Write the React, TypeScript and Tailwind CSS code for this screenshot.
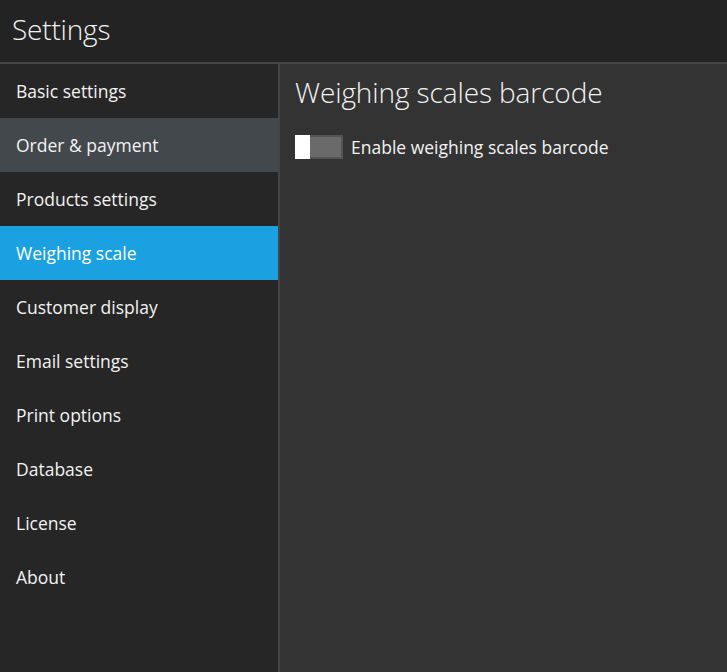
const menu = [
  "Basic settings",
  "Order & payment",
  "Products settings",
  "Weighing scale",
  "Customer display",
  "Email settings",
  "Print options",
  "Database",
  "License",
  "About",
];

export default function App() {
  const active = "Weighing scale";
  const hovered = "Order & payment";

  return (
    <div className="flex flex-col w-[727px] h-[672px] bg-[#333333] text-[#f2f2f2] font-['Open_Sans',sans-serif] overflow-hidden">
      <header className="h-[64px] shrink-0 bg-[#232323] border-b-2 border-[#474747] flex items-center px-3">
        <h1 className="text-[28px] font-light tracking-[-0.2px] leading-none -mt-1">Settings</h1>
      </header>
      <div className="flex flex-1 min-h-0">
        <nav className="w-[280px] shrink-0 bg-[#262626] border-r-2 border-[#444444] flex flex-col">
          {menu.map((item) => (
            <div
              key={item}
              className={
                "h-[54px] flex items-center px-4 text-[17.5px] " +
                (item === active
                  ? "bg-[#1ba1e2] text-white"
                  : item === hovered
                    ? "bg-[#43484c]"
                    : "")
              }
            >
              {item}
            </div>
          ))}
        </nav>
        <main className="flex-1 px-[15px] pt-[10px]">
          <h2 className="text-[28px] font-light leading-[36px] tracking-[-0.1px]">Weighing scales barcode</h2>
          <div className="flex items-center gap-2 mt-[24px]">
            <div className="w-[48px] h-[24px] border-2 border-[#555555] bg-[#6a6a6a] flex">
              <div className="w-[15px] h-[24px] -mt-[2px] -ml-[2px] bg-white" />
            </div>
            <span className="text-[17.5px]">Enable weighing scales barcode</span>
          </div>
        </main>
      </div>
    </div>
  );
}
